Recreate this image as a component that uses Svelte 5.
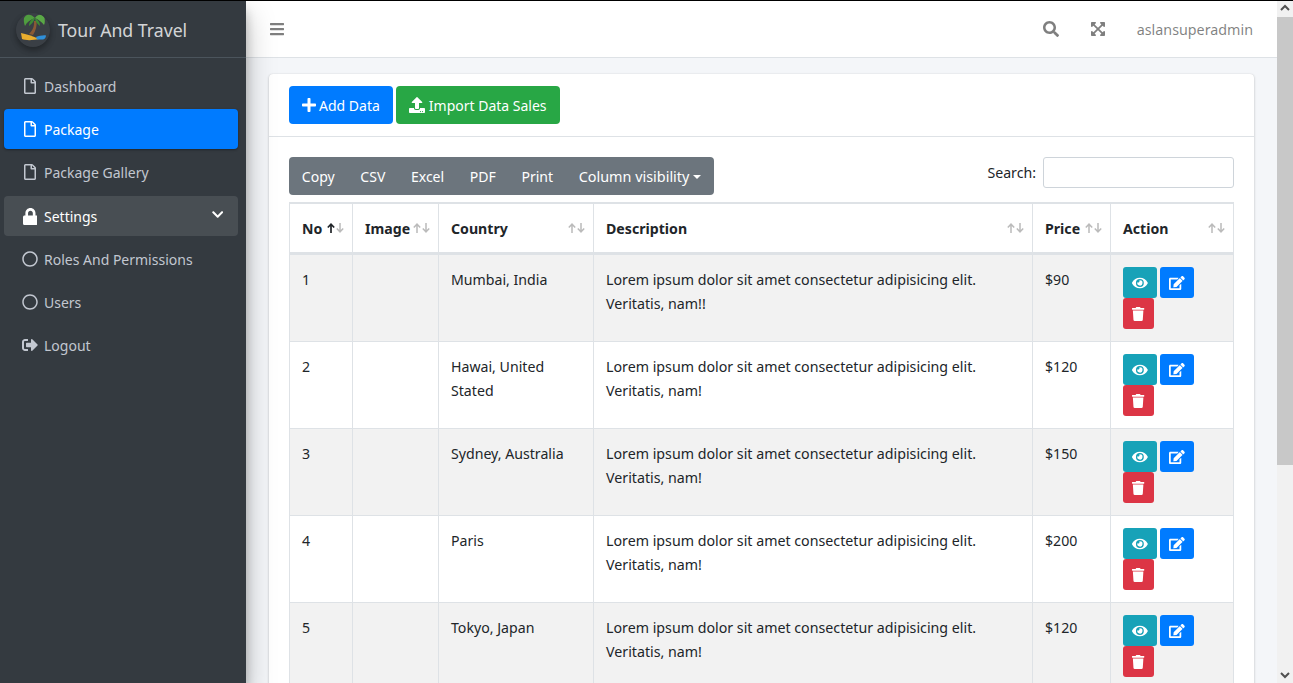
<script>
  const icons = {
    file: ['0 0 384 512', 'M369.9 97.9L286 14C277 5 264.8-.1 252.1-.1H48C21.5 0 0 21.5 0 48v416c0 26.5 21.5 48 48 48h288c26.5 0 48-21.5 48-48V131.9c0-12.7-5.1-25-14.1-34zM332.1 128H256V51.9l76.1 76.1zM48 464V48h160v104c0 13.3 10.7 24 24 24h104v288H48z'],
    lock: ['0 0 448 512', 'M400 224h-24v-72C376 68.2 307.8 0 224 0S72 68.2 72 152v72H48c-26.5 0-48 21.5-48 48v192c0 26.5 21.5 48 48 48h352c26.5 0 48-21.5 48-48V272c0-26.5-21.5-48-48-48zm-104 0H152v-72c0-39.7 32.3-72 72-72s72 32.3 72 72v72z'],
    circle: ['0 0 512 512', 'M256 8C119 8 8 119 8 256s111 248 248 248 248-111 248-248S393 8 256 8zm0 448c-110.5 0-200-89.5-200-200S145.5 56 256 56s200 89.5 200 200-89.5 200-200 200z'],
    logout: ['0 0 512 512', 'M497 273L329 441c-15 15-41 4.5-41-17v-96H152c-13.3 0-24-10.7-24-24v-96c0-13.3 10.7-24 24-24h136V88c0-21.4 25.9-32 41-17l168 168c9.3 9.4 9.3 24.6 0 34zM192 436v-40c0-6.6-5.4-12-12-12H96c-17.7 0-32-14.3-32-32V160c0-17.7 14.3-32 32-32h84c6.6 0 12-5.4 12-12V76c0-6.6-5.4-12-12-12H96c-53 0-96 43-96 96v192c0 53 43 96 96 96h84c6.6 0 12-5.4 12-12z'],
    chevron: ['0 0 448 512', 'M207.029 381.476L12.686 187.132c-9.373-9.373-9.373-24.569 0-33.941l22.667-22.667c9.357-9.357 24.522-9.375 33.901-.04L224 284.505l154.745-154.021c9.379-9.335 24.544-9.317 33.901.04l22.667 22.667c9.373 9.373 9.373 24.569 0 33.941L240.971 381.476c-9.373 9.372-24.569 9.372-33.942 0z'],
    bars: ['0 0 448 512', 'M16 132h416c8.837 0 16-7.163 16-16V76c0-8.837-7.163-16-16-16H16C7.163 60 0 67.163 0 76v40c0 8.837 7.163 16 16 16zm0 160h416c8.837 0 16-7.163 16-16v-40c0-8.837-7.163-16-16-16H16c-8.837 0-16 7.163-16 16v40c0 8.837 7.163 16 16 16zm0 160h416c8.837 0 16-7.163 16-16v-40c0-8.837-7.163-16-16-16H16c-8.837 0-16 7.163-16 16v40c0 8.837 7.163 16 16 16z'],
    search: ['0 0 512 512', 'M505 442.7L405.3 343c-4.5-4.5-10.6-7-17-7H372c27.6-35.3 44-79.7 44-128C416 93.1 322.9 0 208 0S0 93.1 0 208s93.1 208 208 208c48.3 0 92.7-16.4 128-44v16.3c0 6.4 2.5 12.5 7 17l99.7 99.7c9.4 9.4 24.6 9.4 33.9 0l28.3-28.3c9.4-9.4 9.4-24.6.1-34zM208 336c-70.7 0-128-57.2-128-128 0-70.7 57.2-128 128-128 70.7 0 128 57.2 128 128 0 70.7-57.2 128-128 128z'],
    expand: ['0 0 448 512', 'M448.1 344v112c0 13.3-10.7 24-24 24h-112c-21.4 0-32.1-25.9-17-41l36.2-36.2L224 295.6 116.8 402.9 153 439c15.1 15.1 4.4 41-17 41H24c-13.3 0-24-10.7-24-24V344c0-21.4 25.9-32.1 41-17l36.2 36.2L184.5 256 77.2 148.7 41 185c-15.1 15.1-41 4.4-41-17V56c0-13.3 10.7-24 24-24h112c21.4 0 32.1 25.9 17 41l-36.2 36.2L224 216.4l107.3-107.3L295.1 73c-15.1-15.1-4.4-41 17-41h112c13.3 0 24 10.7 24 24v112c0 21.4-25.9 32.1-41 17l-36.2-36.2L263.6 256l107.3 107.3 36.2-36.2c15.1-15.2 41-4.5 41 16.9z'],
    plus: ['0 0 448 512', 'M416 208H272V64c0-17.67-14.33-32-32-32h-32c-17.67 0-32 14.33-32 32v144H32c-17.67 0-32 14.33-32 32v32c0 17.67 14.33 32 32 32h144v144c0 17.67 14.33 32 32 32h32c17.67 0 32-14.33 32-32V304h144c17.67 0 32-14.33 32-32v-32c0-17.67-14.33-32-32-32z'],
    upload: ['0 0 512 512', 'M296 384h-80c-13.3 0-24-10.7-24-24V192h-87.7c-17.8 0-26.7-21.5-14.1-34.1L242.3 5.7c7.5-7.5 19.8-7.5 27.3 0l152.2 152.2c12.6 12.6 3.7 34.1-14.1 34.1H320v168c0 13.3-10.7 24-24 24zm216-8v112c0 13.3-10.7 24-24 24H24c-13.3 0-24-10.7-24-24V376c0-13.3 10.7-24 24-24h136v8c0 30.9 25.1 56 56 56h80c30.9 0 56-25.1 56-56v-8h136c13.3 0 24 10.7 24 24zm-124 88c0-11-9-20-20-20s-20 9-20 20 9 20 20 20 20-9 20-20zm64 0c0-11-9-20-20-20s-20 9-20 20 9 20 20 20 20-9 20-20z'],
    eye: ['0 0 576 512', 'M572.52 241.4C518.29 135.59 410.93 64 288 64S57.68 135.64 3.48 241.41a32.35 32.35 0 0 0 0 29.19C57.71 376.41 165.07 448 288 448s230.32-71.64 284.52-177.41a32.35 32.35 0 0 0 0-29.19zM288 400a144 144 0 1 1 144-144 143.93 143.93 0 0 1-144 144zm0-240a95.31 95.31 0 0 0-25.31 3.79 47.85 47.85 0 0 1-66.9 66.9A95.78 95.78 0 1 0 288 160z'],
    edit: ['0 0 576 512', 'M402.6 83.2l90.2 90.2c3.8 3.8 3.8 10 0 13.8L274.4 405.6l-92.8 10.3c-12.4 1.4-22.9-9.1-21.5-21.5l10.3-92.8L388.8 83.2c3.8-3.8 10-3.8 13.8 0zm162-22.9l-48.8-48.8c-15.2-15.2-39.9-15.2-55.2 0l-35.4 35.4c-3.8 3.8-3.8 10 0 13.8l90.2 90.2c3.8 3.8 10 3.8 13.8 0l35.4-35.4c15.2-15.3 15.2-40 0-55.2zM384 346.2V448H64V128h229.8c3.2 0 6.2-1.3 8.5-3.5l40-40c7.6-7.6 2.2-20.5-8.5-20.5H48C21.5 64 0 85.5 0 112v352c0 26.5 21.5 48 48 48h352c26.5 0 48-21.5 48-48V306.2c0-10.7-12.9-16-20.5-8.5l-40 40c-2.2 2.3-3.5 5.3-3.5 8.5z'],
    trash: ['0 0 448 512', 'M432 32H312l-9.4-18.7A24 24 0 0 0 281.1 0H166.8a23.72 23.72 0 0 0-21.4 13.3L136 32H16A16 16 0 0 0 0 48v32a16 16 0 0 0 16 16h416a16 16 0 0 0 16-16V48a16 16 0 0 0-16-16zM53.2 467a48 48 0 0 0 47.9 45h245.8a48 48 0 0 0 47.9-45L416 128H32z']
  };

  const nav = [
    { label: 'Dashboard', icon: 'file' },
    { label: 'Package', icon: 'file', cls: 'active' },
    { label: 'Package Gallery', icon: 'file' },
    { label: 'Settings', icon: 'lock', cls: 'open' },
    { label: 'Roles And Permissions', icon: 'circle' },
    { label: 'Users', icon: 'circle' },
    { label: 'Logout', icon: 'logout' }
  ];

  const exportBtns = ['Copy', 'CSV', 'Excel', 'PDF', 'Print'];

  const columns = [
    { label: 'No', sorted: true, w: 63 },
    { label: 'Image', w: 86 },
    { label: 'Country', w: 155 },
    { label: 'Description', w: 439 },
    { label: 'Price', w: 78 },
    { label: 'Action', w: 123 }
  ];

  const lorem = 'Lorem ipsum dolor sit amet consectetur adipisicing elit. Veritatis, ';
  const rows = [
    { no: 1, country: 'Mumbai, India', tail: 'nam!!', price: '$90' },
    { no: 2, country: 'Hawai, United Stated', tail: 'nam!', price: '$120' },
    { no: 3, country: 'Sydney, Australia', tail: 'nam!', price: '$150' },
    { no: 4, country: 'Paris', tail: 'nam!', price: '$200' },
    { no: 5, country: 'Tokyo, Japan', tail: 'nam!', price: '$120' }
  ];
</script>

{#snippet icon(name, cls = '')}
  <svg class="ic {cls}" viewBox={icons[name][0]} aria-hidden="true"><path d={icons[name][1]} fill="currentColor" /></svg>
{/snippet}

<div class="shell">
  <aside class="sidebar">
    <div class="brand">
      <svg class="logo" viewBox="0 0 34 34" aria-hidden="true">
        <circle cx="17" cy="17" r="17" fill="#3a3f45" />
        <path d="M18 8 C18.5 13 17 17 13 21 L17 22 C20 17 21 13 20.5 8 Z" fill="#8a5a34" />
        <path d="M19 5 C15 .5 10 .5 8 5 C7.5 8 8 10 9 13 C11 9 14 7 19 5 Z" fill="#4f9d3f" />
        <path d="M19 5 C22 .5 27 1 28.5 5 C29 8 29 10 28 12 C26 9 23 7 19 5 Z" fill="#5aa846" />
        <path d="M19 5 C15 6 13 9 13 13 C16 11 18 8 19 5 Z M19 5 C22 7 24 9 24 13 C21 11 19 8 19 5 Z" fill="#3d8a35" />
        <path d="M5 20 C10 21 17 23 23 26 C17 27.5 9 27.5 6 26 Z" fill="#e8ad2e" />
        <path d="M20 24 C23 23 27 22 30 22.5 C30 24 29 26 27 26.5 L21 26.5 Z" fill="#2f8fd8" />
      </svg>
      <span class="brand-text">Tour And Travel</span>
    </div>
    <nav class="nav">
      {#each nav as item}
        <a class="nav-link {item.cls ?? ''}" href="#top">
          <span class="nav-icon">{@render icon(item.icon)}</span>
          <span class="nav-label">{item.label}</span>
          {#if item.cls === 'open'}
            <span class="caret">{@render icon('chevron')}</span>
          {/if}
        </a>
      {/each}
    </nav>
  </aside>

  <div class="main">
    <header class="topbar">
      <span class="bars">{@render icon('bars')}</span>
      <span class="search-ic">{@render icon('search')}</span>
      <span class="expand-ic">{@render icon('expand')}</span>
      <span class="user">aslansuperadmin</span>
    </header>

    <div class="content">
      <section class="card">
        <div class="card-header">
          <button class="btn blue">{@render icon('plus')} Add Data</button>
          <button class="btn green">{@render icon('upload')} Import Data Sales</button>
        </div>
        <div class="card-body">
          <div class="tools">
            <div class="export">
              {#each exportBtns as b}
                <span class="ex-btn">{b}</span>
              {/each}
              <span class="ex-btn last">Column visibility<i class="drop"></i></span>
            </div>
            <label class="search">Search: <input type="text" /></label>
          </div>

          <table>
            <colgroup>
              {#each columns as c}
                <col style="width:{c.w}px" />
              {/each}
            </colgroup>
            <thead>
              <tr>
                {#each columns as c}
                  <th>
                    {c.label}
                    <span class="sort">
                      <svg class="arr" class:on={c.sorted} viewBox="0 0 8 10" aria-hidden="true"><path d="M4 10 V1.5 M.8 4.5 L4 1.2 L7.2 4.5" /></svg>
                      <svg class="arr" viewBox="0 0 8 10" aria-hidden="true"><path d="M4 0 V8.5 M.8 5.5 L4 8.8 L7.2 5.5" /></svg>
                    </span>
                  </th>
                {/each}
              </tr>
            </thead>
            <tbody>
              {#each rows as r}
                <tr>
                  <td>{r.no}</td>
                  <td></td>
                  <td>{r.country}</td>
                  <td class="desc">{lorem}{r.tail}</td>
                  <td>{r.price}</td>
                  <td class="acts">
                    <span class="act teal">{@render icon('eye')}</span>
                    <span class="act blue">{@render icon('edit')}</span>
                    <span class="act red">{@render icon('trash')}</span>
                  </td>
                </tr>
              {/each}
            </tbody>
          </table>
        </div>
      </section>
    </div>
  </div>

  <div class="scrollbar">
    <svg class="arrow" viewBox="0 0 16 17" aria-hidden="true"><path d="M4 10 L8 6 L12 10" fill="none" stroke="#505050" stroke-width="2" /></svg>
    <div class="thumb"></div>
    <div class="track"></div>
    <svg class="arrow" viewBox="0 0 16 17" aria-hidden="true"><path d="M4 7 L8 11 L12 7" fill="none" stroke="#505050" stroke-width="2" /></svg>
  </div>
</div>

<style>
  :global(body) {
    margin: 0;
    font-family: "Noto Sans", "Liberation Sans", sans-serif;
    font-size: 14.15px;
    line-height: 24px;
    color: #212529;
  }

  .shell {
    display: flex;
    height: 683px;
    overflow: hidden;
    border-top: 1px solid #000;
    box-sizing: border-box;
  }

  .ic { display: block; height: 100%; }

  /* sidebar */
  .sidebar {
    width: 246px;
    flex: none;
    background: #343a40;
    box-shadow: 0 14px 28px rgba(0,0,0,.25), 0 10px 10px rgba(0,0,0,.22);
    position: relative;
    z-index: 2;
  }
  .brand {
    display: flex;
    align-items: center;
    height: 56px;
    border-bottom: 1px solid #4b545c;
    padding-left: 16px;
    color: rgba(255,255,255,.8);
    font-size: 17.7px;
  }
  .brand-text { padding-top: 2px; }
  .logo {
    width: 34px;
    height: 34px;
    margin-right: 8px;
    margin-top: 2px;
    border-radius: 50%;
    box-shadow: 0 3px 6px rgba(0,0,0,.16), 0 3px 6px rgba(0,0,0,.23);
  }
  .nav {
    display: flex;
    flex-direction: column;
    gap: 3px;
    padding: 8px 8px 0 4px;
    font-size: 14px;
  }
  .nav-link {
    display: flex;
    align-items: center;
    height: 40px;
    padding-left: 18px;
    border-radius: 4px;
    color: #c2c7d0;
    text-decoration: none;
    position: relative;
  }
  .nav-icon {
    display: flex;
    justify-content: center;
    align-items: center;
    width: 16px;
    height: 16px;
    margin-right: 6px;
    flex: none;
  }
  .nav-label { padding-top: 2px; }
  .nav-link.active {
    background: #007bff;
    color: #fff;
    box-shadow: 0 1px 3px rgba(0,0,0,.12), 0 1px 2px rgba(0,0,0,.24);
  }
  .nav-link.open {
    background: rgba(255,255,255,.1);
    color: #fff;
    margin-top: 1px;
  }
  .nav-link.open .nav-icon .ic { height: 17px; flex: none; }
  .caret {
    position: absolute;
    right: 15px;
    top: 12px;
    width: 11px;
    height: 13px;
  }

  /* main */
  .main {
    flex: 1;
    min-width: 0;
    display: flex;
    flex-direction: column;
    background: #f4f6f9;
  }
  .topbar {
    height: 56px;
    flex: none;
    display: flex;
    align-items: center;
    background: #fff;
    border-bottom: 1px solid #dee2e6;
    color: rgba(0,0,0,.5);
    padding-left: 24px;
    padding-right: 24px;
  }
  .bars { width: 14px; height: 16px; }
  .search-ic { width: 16px; height: 16px; margin-left: auto; }
  .expand-ic { width: 14px; height: 16px; margin-left: 32px; }
  .user { margin-left: 32px; font-size: 14.3px; padding-top: 1px; }

  .content { padding: 16px 23px 0; }

  .card {
    background: #fff;
    border-radius: 4px;
    box-shadow: 0 0 1px rgba(0,0,0,.125), 0 1px 3px rgba(0,0,0,.2);
  }
  .card-header {
    display: flex;
    gap: 3px;
    padding: 12px 20px;
    border-bottom: 1px solid #dee2e6;
  }
  .btn {
    display: flex;
    align-items: center;
    gap: 3px;
    height: 38px;
    padding: 1px 12px 0;
    border: 1px solid transparent;
    border-radius: 4px;
    color: #fff;
    font: inherit;
    font-size: 14px;
  }
  .btn .ic { height: 16px; margin-top: -1px; }
  .btn.blue { background: #007bff; }
  .btn.green { background: #28a745; gap: 4px; }
  .card-body { padding: 20px; }

  .tools {
    display: flex;
    justify-content: space-between;
    margin-bottom: 7px;
  }
  .export {
    display: flex;
    height: 38px;
    align-items: center;
    background: #6c757d;
    border-radius: 4px;
    color: #fff;
    font-size: 14.05px;
  }
  .ex-btn { padding: 1px 12.8px 0; }
  .ex-btn.last { font-size: 14.4px; }
  .drop {
    display: inline-block;
    margin-left: 4px;
    vertical-align: 3px;
    border-top: 4.5px solid #fff;
    border-left: 4.5px solid transparent;
    border-right: 4.5px solid transparent;
  }
  .search {
    display: flex;
    align-items: flex-start;
    gap: 7px;
    line-height: 31px;
  }
  .search input {
    width: 191px;
    height: 31px;
    box-sizing: border-box;
    border: 1px solid #ced4da;
    border-radius: 3px;
    padding: 0 8px;
  }

  table {
    width: 945px;
    table-layout: fixed;
    border-collapse: collapse;
  }
  th, td {
    border: 1px solid #dee2e6;
    padding: 13px 12px 11px;
    text-align: left;
    vertical-align: top;
    box-sizing: border-box;
  }
  th {
    position: relative;
    border-top-width: 2px;
    border-bottom-width: 3px;
    font-weight: 700;
    white-space: nowrap;
  }
  tbody tr:nth-child(odd) { background: #f2f2f2; }
  .desc { font-size: 14.22px; }

  .sort {
    position: absolute;
    top: 19px;
    right: 8px;
    display: flex;
    gap: 1px;
  }
  .arr {
    display: block;
    width: 8px;
    height: 10px;
  }
  .arr path {
    fill: none;
    stroke: #bbb;
    stroke-width: 1.5;
  }
  .arr.on path { stroke: #212529; stroke-width: 1.7; }

  .acts { font-size: 0; line-height: 0; padding: 12px; }
  .act {
    display: inline-flex;
    align-items: center;
    justify-content: center;
    height: 31px;
    border-radius: 3px;
    color: #fff;
    vertical-align: top;
  }
  .act .ic { height: 14px; }
  .act.teal { width: 34px; background: #17a2b8; }
  .act.blue { width: 34px; background: #007bff; margin-left: 3px; }
  .act.red { width: 31px; background: #dc3545; }

  /* scrollbar */
  .scrollbar {
    width: 16px;
    flex: none;
    display: flex;
    flex-direction: column;
    background: #f1f1f1;
    margin-top: -1px;
    position: relative;
    z-index: 3;
  }
  .arrow { flex: none; width: 16px; height: 17px; }
  .thumb { height: 448px; flex: none; background: #c8c8c8; }
  .track { flex: 1; }
</style>
